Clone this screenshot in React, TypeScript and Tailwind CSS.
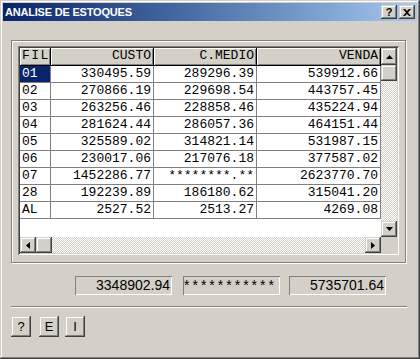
const rows = [
  ["01", "330495.59", "289296.39", "539912.66"],
  ["02", "270866.19", "229698.54", "443757.45"],
  ["03", "263256.46", "228858.46", "435224.94"],
  ["04", "281624.44", "286057.36", "464151.44"],
  ["05", "325589.02", "314821.14", "531987.15"],
  ["06", "230017.06", "217076.18", "377587.02"],
  ["07", "1452286.77", "********.**", "2623770.70"],
  ["28", "192239.89", "186180.62", "315041.20"],
  ["AL", "2527.52", "2513.27", "4269.08"],
];

const raised =
  "bg-[#d4d0c8] shadow-[inset_-1px_-1px_#404040,inset_1px_1px_#d4d0c8,inset_-2px_-2px_#808080,inset_2px_2px_#fff]";

const checker =
  "bg-[image:conic-gradient(#fff_25%,#d4d0c8_0_50%,#fff_0_75%,#d4d0c8_0)] bg-[length:2px_2px]";

const Arrow = ({ dir }: { dir: "up" | "down" | "left" | "right" }) => {
  const pts = {
    up: "3.5,0 7,4 0,4",
    down: "0,0 7,0 3.5,4",
    left: "4,0 4,7 0,3.5",
    right: "0,0 4,3.5 0,7",
  }[dir];
  const vertical = dir === "up" || dir === "down";
  return (
    <svg width={vertical ? 7 : 4} height={vertical ? 4 : 7} viewBox={vertical ? "0 0 7 4" : "0 0 4 7"}>
      <polygon points={pts} fill="#000" />
    </svg>
  );
};

const App = () => {
  return (
    <div className="w-[420px] h-[359px] bg-[#d4d0c8] p-[3px] flex flex-col font-['Liberation_Sans',sans-serif] shadow-[inset_-1px_-1px_#404040,inset_1px_1px_#d4d0c8,inset_-2px_-2px_#808080,inset_2px_2px_#fff]">
      {/* Title bar */}
      <div className="h-[18px] flex items-center pl-[2px] pr-[2px] bg-gradient-to-r from-[#0a246a] to-[#a6caf0]">
        <span className="text-white font-bold text-[11px] tracking-[-0.2px] leading-none">
          ANALISE DE ESTOQUES
        </span>
        <div className="ml-auto flex gap-[2px]">
          <div className={`w-[16px] h-[14px] flex items-center justify-center text-[11px] font-bold leading-none text-black ${raised}`}>
            ?
          </div>
          <div className={`w-[16px] h-[14px] flex items-center justify-center ${raised}`}>
            <svg width="8" height="7" viewBox="0 0 8 7">
              <path d="M0 0h2l2 2 2-2h2L5 3.5 8 7H6L4 5 2 7H0l3-3.5z" fill="#000" />
            </svg>
          </div>
        </div>
      </div>

      {/* Group frame */}
      <div className="ml-[8px] mt-[19px] w-[395px] h-[223px] border border-[#808080] shadow-[inset_1px_1px_#fff,1px_1px_#fff] pl-[6px] pt-[5px]">
        <div className="w-[381px] h-[209px] p-[2px] shadow-[inset_1px_1px_#808080,inset_-1px_-1px_#fff,inset_2px_2px_#404040,inset_-2px_-2px_#d4d0c8]">
          <div className="flex h-[189px]">
            {/* table */}
            <div className="w-[361px] bg-white font-['Liberation_Mono',monospace] text-[13px] text-black">
              <div className="flex h-[18px] leading-[16px]">
                <div className="w-[31px] pl-[2px] overflow-hidden whitespace-nowrap tracking-[1.5px] border-r border-b border-black bg-[#d4d0c8] shadow-[inset_1px_1px_#fff,inset_-1px_-1px_#808080]">
                  FILIAL
                </div>
                <div className="w-[103px] pr-[2px] text-right border-r border-b border-black bg-[#d4d0c8] shadow-[inset_1px_1px_#fff,inset_-1px_-1px_#808080]">
                  CUSTO
                </div>
                <div className="w-[103px] pr-[2px] text-right border-r border-b border-black bg-[#d4d0c8] shadow-[inset_1px_1px_#fff,inset_-1px_-1px_#808080]">
                  C.MEDIO
                </div>
                <div className="w-[124px] pr-[2px] text-right border-r border-b border-black bg-[#d4d0c8] shadow-[inset_1px_1px_#fff,inset_-1px_-1px_#808080]">
                  VENDA
                </div>
              </div>
              {rows.map((r, i) => (
                <div key={r[0]} className="flex h-[17px] leading-[16px]">
                  <div
                    className={`w-[31px] pl-[2px] border-r border-b border-[#808080] ${
                      i === 0 ? "bg-[#0a246a] text-white" : ""
                    }`}
                  >
                    {r[0]}
                  </div>
                  <div className="w-[103px] pr-[2px] text-right border-r border-b border-[#808080]">{r[1]}</div>
                  <div className="w-[103px] pr-[2px] text-right border-r border-b border-[#808080] whitespace-nowrap">{r[2]}</div>
                  <div className="w-[124px] pr-[2px] text-right border-r border-b border-[#808080]">{r[3]}</div>
                </div>
              ))}
            </div>
            {/* vertical scrollbar */}
            <div className={`w-[16px] flex flex-col ${checker}`}>
              <div className={`h-[17px] flex items-center justify-center ${raised}`}>
                <Arrow dir="up" />
              </div>
              <div className={`h-[16px] ${raised}`} />
              <div className="flex-1" />
              <div className={`h-[16px] flex items-center justify-center ${raised}`}>
                <Arrow dir="down" />
              </div>
            </div>
          </div>
          <div className="flex h-[16px]">
            <div className={`w-[361px] flex ${checker}`}>
              <div className={`w-[16px] flex items-center justify-center ${raised}`}>
                <Arrow dir="left" />
              </div>
              <div className={`w-[16px] ${raised}`} />
              <div className="flex-1" />
              <div className={`w-[16px] flex items-center justify-center ${raised}`}>
                <Arrow dir="right" />
              </div>
            </div>
            <div className="w-[16px] bg-[#d4d0c8]" />
          </div>
        </div>
      </div>

      {/* Totals */}
      <div className="flex mt-[13px] ml-[72px] h-[19px] text-[14px] text-black leading-[19px]">
        <div className="w-[97px] pr-[2px] text-right shadow-[inset_1px_1px_#808080,inset_-1px_-1px_#fff]">
          3348902.94
        </div>
        <div className="w-[97px] ml-[11px] pl-[1px] overflow-hidden whitespace-nowrap tracking-[3px] shadow-[inset_1px_1px_#808080,inset_-1px_-1px_#fff]">
          ***********
        </div>
        <div className="w-[97px] ml-[9px] pr-[2px] text-right shadow-[inset_1px_1px_#808080,inset_-1px_-1px_#fff]">
          5735701.64
        </div>
      </div>

      {/* Separator */}
      <div className="ml-[8px] mt-[11px] w-[396px] h-[2px] border-t border-[#808080] border-b border-b-white" />

      {/* Buttons */}
      <div className="flex ml-[8px] mt-[8px] text-[13px] text-black">
        <button className={`w-[20px] h-[21px] flex items-center justify-center ${raised}`}>?</button>
        <button className={`w-[20px] h-[21px] ml-[8px] flex items-center justify-center ${raised}`}>E</button>
        <button className={`w-[20px] h-[21px] ml-[6px] flex items-center justify-center ${raised}`}>I</button>
      </div>
    </div>
  );
};

export default App;
